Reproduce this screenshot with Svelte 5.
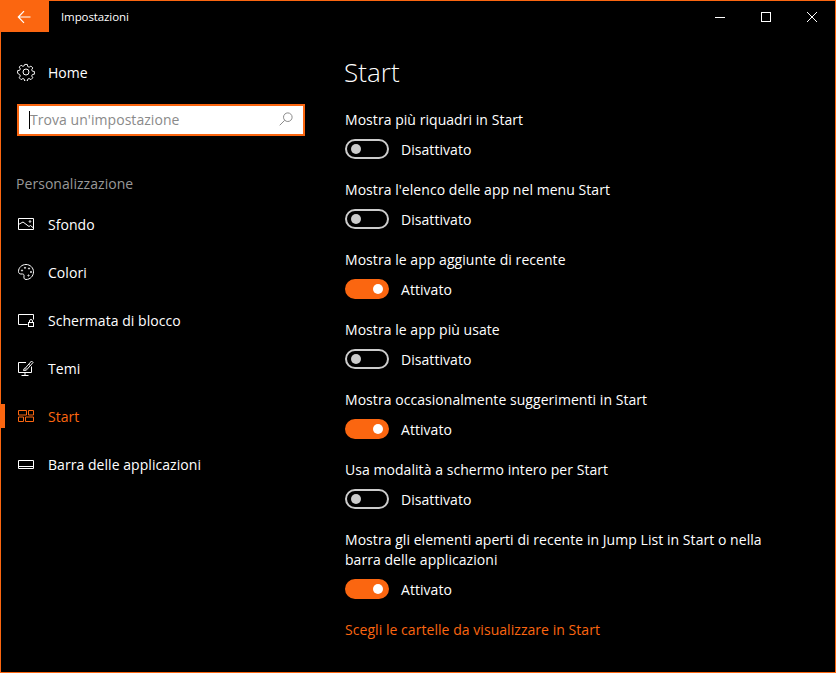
<script>
  const navItems = [
    { label: 'Sfondo', icon: 'picture' },
    { label: 'Colori', icon: 'palette' },
    { label: 'Schermata di blocco', icon: 'lock' },
    { label: 'Temi', icon: 'theme' },
    { label: 'Start', icon: 'start', active: true },
    { label: 'Barra delle applicazioni', icon: 'taskbar' }
  ]

  const settings = [
    { label: 'Mostra più riquadri in Start', on: false },
    { label: "Mostra l'elenco delle app nel menu Start", on: false },
    { label: 'Mostra le app aggiunte di recente', on: true },
    { label: 'Mostra le app più usate', on: false },
    { label: 'Mostra occasionalmente suggerimenti in Start', on: true },
    { label: 'Usa modalità a schermo intero per Start', on: false },
    { label: 'Mostra gli elementi aperti di recente in Jump List in Start o nella barra delle applicazioni', on: true }
  ]
</script>

<div class="window">
  <header class="titleBar">
    <button class="backBtn" aria-label="Indietro">
      <svg width="16" height="14" viewBox="0 0 16 14" fill="none" stroke="#fff" stroke-width="1.2">
        <path d="M13.500 7H1.500M7 1.200 1.300 7 7 12.800" />
      </svg>
    </button>
    <span class="appTitle">Impostazioni</span>
    <div class="winControls">
      <div class="winBtn">
        <svg width="12" height="12" viewBox="0 0 12 12" stroke="#fff" fill="none"><path d="M1 6.500h10" /></svg>
      </div>
      <div class="winBtn">
        <svg width="12" height="12" viewBox="0 0 12 12" stroke="#fff" fill="none"><rect x="1.500" y="1.500" width="9" height="9" /></svg>
      </div>
      <div class="winBtn">
        <svg width="12" height="12" viewBox="0 0 12 12" stroke="#fff" fill="none"><path d="M1 1l10 10M11 1 1 11" /></svg>
      </div>
    </div>
  </header>

  <div class="body">
    <aside class="sidebar">
      <div class="homeRow">
        <svg class="navIcon" width="18" height="18" viewBox="0 0 18 18" fill="none" stroke="#fff" stroke-width="1">
          <circle cx="9" cy="9" r="3" />
          <path d="M7.600 1h2.800l.4 2.200 1.500.7 1.900-1.200 2 2-1.200 1.900.7 1.500 2.200.4v2.800l-2.200.4-.7 1.500 1.200 1.900-2 2-1.900-1.200-1.500.7-.4 2.200H7.600l-.4-2.200-1.500-.7-1.900 1.200-2-2 1.200-1.900-.7-1.500L.1 10.400V7.600l2.200-.4.7-1.500L1.800 3.800l2-2 1.900 1.200 1.500-.7z" transform="translate(.5 .5) scale(.945)" />
        </svg>
        <span>Home</span>
      </div>

      <div class="searchBox">
        <span class="caret"></span>
        <span class="placeholder">Trova un'impostazione</span>
        <svg class="searchIcon" width="14" height="14" viewBox="0 0 14 14" fill="none" stroke="#8a8a8a" stroke-width="1">
          <circle cx="8.800" cy="5.200" r="4.300" />
          <path d="M5.700 8.300.7 13.300" />
        </svg>
      </div>

      <div class="groupTitle">Personalizzazione</div>

      <nav class="nav">
        {#each navItems as item}
          <div class="navItem" class:active={item.active}>
            <svg class="navIcon" width="18" height="18" viewBox="0 0 18 18" fill="none" stroke="currentColor" stroke-width="1">
              {#if item.icon === 'picture'}
                <path d="M1.500 3.500h15v11h-15z" />
                <path d="M1.500 9.500 6 7l6 4.500 1.500-1 3 2.500" />
                <circle cx="13" cy="6.500" r=".8" />
              {:else if item.icon === 'palette'}
                <path d="M9 1.500C4.800 1.500 1.500 4.600 1.500 8.500c0 1.500 1 2.500 2.300 2.500h1.700c1.200 0 1.700.8 1.500 2-.2 1.300-.2 3.500 2 3.500 4.200 0 7.500-3.400 7.500-7.700 0-4-3.300-7.300-7.500-7.300z" />
                <circle cx="5" cy="7.500" r=".6" />
                <circle cx="8" cy="4.800" r=".6" />
                <circle cx="12" cy="5.500" r=".6" />
                <circle cx="14" cy="9" r=".6" />
                <circle cx="11.500" cy="12.500" r=".6" />
              {:else if item.icon === 'lock'}
                <path d="M10.500 13.500h-9v-10h15v5" />
                <rect x="11.500" y="11.500" width="5" height="4" />
                <path d="M12.500 11.500V10a1.500 1.500 0 0 1 3 0v1.500" />
              {:else if item.icon === 'theme'}
                <path d="M9 3.500H1.500v10h13V7.500M8 13.500v2.500M4.500 16.500h7" />
                <path d="M6.500 11.500c0-1.600.7-2.300 1.800-2.300L14.500 2l1.500 1.500-5.800 6.700c-.3 1-1.700 1.300-3.700 1.300z" />
                <path d="M7.500 10.500 9.500 9.500M12 5.500l1.500 1" stroke-width=".8" />
              {:else if item.icon === 'start'}
                <path d="M1.500 3.500h8v4.500h-8zM11.500 3.500h5v4.500h-5zM1.500 10h5v4.500h-5zM8.500 10h8v4.500h-8z" />
              {:else}
                <path d="M1.500 5.500h15v8h-15zM1.500 11.500h15" />
              {/if}
            </svg>
            <span>{item.label}</span>
          </div>
        {/each}
      </nav>
    </aside>

    <main class="content">
      <h1 class="pageTitle">Start</h1>
      {#each settings as s}
        <div class="setting">
          <div class="settingLabel">{s.label}</div>
          <div class="toggleRow">
            <div class="toggle" class:on={s.on}><span class="thumb"></span></div>
            <span>{s.on ? 'Attivato' : 'Disattivato'}</span>
          </div>
        </div>
      {/each}
      <div class="link">Scegli le cartelle da visualizzare in Start</div>
    </main>
  </div>
</div>

<style>
  :global(body) {
    margin: 0;
    background: #000;
  }

  .window {
    box-sizing: border-box;
    width: 836px;
    height: 673px;
    border: 1px solid #fb6610;
    background: #000;
    color: #fff;
    font-family: "Open Sans", "Noto Sans", sans-serif;
    overflow: hidden;
    letter-spacing: 0.05px;
  }

  .titleBar {
    display: flex;
    align-items: center;
    height: 31px;
  }

  .backBtn {
    display: flex;
    align-items: center;
    justify-content: center;
    width: 48px;
    height: 31px;
    padding: 0;
    border: 0;
    background: #fb6610;
  }

  .appTitle {
    margin-left: 12px;
    font-size: 11.500px;
    letter-spacing: -0.1px;
  }

  .winControls {
    display: flex;
    margin-left: auto;
  }

  .winBtn {
    display: flex;
    align-items: center;
    justify-content: center;
    width: 46px;
    height: 31px;
  }

  .body {
    display: flex;
  }

  .sidebar {
    width: 344px;
    flex-shrink: 0;
  }

  .homeRow {
    display: flex;
    align-items: center;
    gap: 13px;
    height: 20px;
    margin-top: 30px;
    padding-left: 16px;
    font-size: 14px;
  }

  .searchBox {
    position: relative;
    display: flex;
    align-items: center;
    justify-content: space-between;
    box-sizing: border-box;
    width: 288px;
    height: 32px;
    margin: 22px 0 0 16px;
    padding: 0 10px 2px 11px;
    border: 2px solid #fb6610;
    background: #fff;
    color: #8a8a8a;
    font-size: 14px;
  }

  .caret {
    position: absolute;
    left: 10px;
    top: 5px;
    width: 1px;
    height: 18px;
    background: #000;
  }

  .groupTitle {
    margin: 38px 0 0 15px;
    color: #999;
    font-size: 14px;
    line-height: 20px;
  }

  .nav {
    margin-top: 6px;
  }

  .navItem {
    display: flex;
    align-items: center;
    gap: 13px;
    height: 48px;
    padding-left: 16px;
    font-size: 14px;
    color: #fff;
    position: relative;
  }

  .navItem.active {
    color: #fb6610;
  }

  .navItem.active::before {
    content: "";
    position: absolute;
    left: 0;
    top: 12px;
    width: 4px;
    height: 24px;
    background: #fb6610;
  }

  .content {
    flex: 1;
    min-width: 0;
    padding-right: 60px;
    margin-left: -1px;
  }

  .pageTitle {
    margin: 22px 0 0;
    font-size: 26px;
    font-weight: 300;
    line-height: 36px;
  }

  .setting {
    margin: 20px 0 0 1px;
    font-size: 14px;
  }

  .pageTitle + .setting {
    margin-top: 19px;
  }

  .settingLabel {
    padding-top: 1px;
    line-height: 20px;
    color: #fff;
  }

  .toggleRow {
    display: flex;
    align-items: center;
    gap: 12px;
    height: 20px;
    margin-top: 9px;
  }

  .toggle {
    display: flex;
    align-items: center;
    box-sizing: border-box;
    width: 44px;
    height: 20px;
    padding: 0 4px;
    border: 2px solid #ccc;
    border-radius: 10px;
  }

  .thumb {
    width: 10px;
    height: 10px;
    border-radius: 50%;
    background: #ccc;
  }

  .toggle.on {
    justify-content: flex-end;
    border-color: #fb6610;
    background: #fb6610;
  }

  .toggle.on .thumb {
    background: #fff;
  }

  .link {
    margin: 21px 0 0 1px;
    color: #fb6610;
    font-size: 14px;
    line-height: 20px;
  }
</style>
